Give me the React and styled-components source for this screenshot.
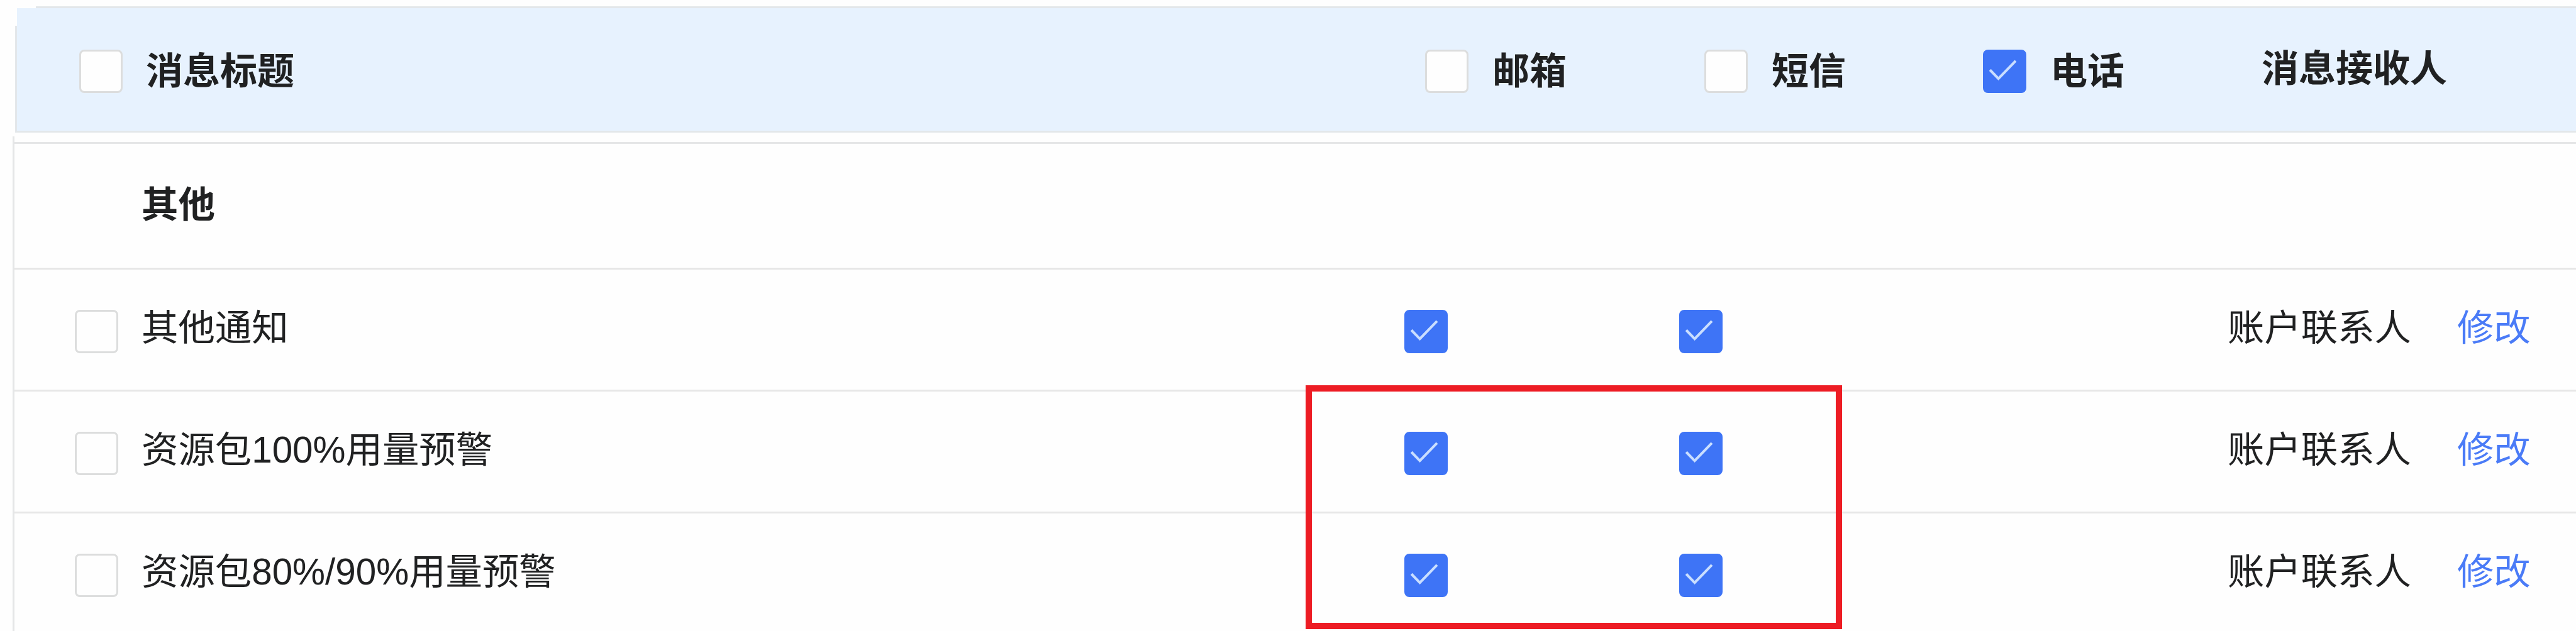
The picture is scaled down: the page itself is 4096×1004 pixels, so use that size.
import React, { useState } from "react";
import styled, { createGlobalStyle } from "styled-components";

const channels = [
  { key: "mail", label: "邮箱" },
  { key: "sms", label: "短信" },
  { key: "phone", label: "电话" },
];

const initialRows = [
  { id: 1, title: "其他通知", mail: true, sms: true },
  { id: 2, title: "资源包100%用量预警", mail: true, sms: true },
  { id: 3, title: "资源包80%/90%用量预警", mail: true, sms: true },
];

const CheckBox = ({ checked, onClick }) => (
  <Box $checked={checked} role="checkbox" aria-checked={checked} onClick={onClick}>
    {checked && (
      <svg viewBox="0 0 77 77">
        <path d="M12.5 36 L27.5 51.5 L58 20" />
      </svg>
    )}
  </Box>
);

const App = () => {
  const [rows, setRows] = useState(initialRows);
  const [head, setHead] = useState({ all: false, mail: false, sms: false, phone: true });

  const toggleHead = (key) => {
    setHead({ ...head, [key]: !head[key] });
  };

  const toggleRow = (id, key) => {
    setRows(rows.map((row) => (row.id === id ? { ...row, [key]: !row[key] } : row)));
  };

  return (
    <Page>
      <GlobalStyle />
      <Header>
        <HeadTitle>
          <CheckBox checked={head.all} onClick={() => toggleHead("all")} />
          <span>消息标题</span>
        </HeadTitle>
        {channels.map((channel) => (
          <HeadCell key={channel.key}>
            <CheckBox
              checked={head[channel.key]}
              onClick={() => toggleHead(channel.key)}
            />
            <span>{channel.label}</span>
          </HeadCell>
        ))}
        <HeadReceiver>消息接收人</HeadReceiver>
      </Header>
      <Body>
        <GroupRow>其他</GroupRow>
        {rows.map((row) => (
          <Row key={row.id}>
            <TitleCell>
              <CheckBox
                checked={!!row.picked}
                onClick={() => toggleRow(row.id, "picked")}
              />
              <Text>{row.title}</Text>
            </TitleCell>
            <CheckBox checked={row.mail} onClick={() => toggleRow(row.id, "mail")} />
            <CheckBox checked={row.sms} onClick={() => toggleRow(row.id, "sms")} />
            <Receiver>
              <Text>账户联系人</Text>
              <Modify>修改</Modify>
            </Receiver>
          </Row>
        ))}
      </Body>
      <Highlight />
    </Page>
  );
};

const GlobalStyle = createGlobalStyle`
  * {
    box-sizing: border-box;
  }
  body {
    margin: 0;
    background: #fefefe;
  }
`;

const Page = styled.div`
  position: relative;
  width: 4096px;
  height: 1004px;
  padding-top: 10px;
  overflow: hidden;
  color: #202122;
  font-family: "Liberation Sans", "Noto Sans CJK SC", sans-serif;
  font-size: 58.4px;
  line-height: 70px;
  white-space: nowrap;
`;

const Box = styled.div`
  width: 69px;
  height: 69px;
  flex: none;
  border: 3px solid ${(props) => (props.$checked ? "#3e74f6" : "#dcdddd")};
  border-radius: 8px;
  background: ${(props) => (props.$checked ? "#3e74f6" : "#fefefe")};
  cursor: pointer;

  svg {
    display: block;
    width: 69px;
    height: 69px;
    margin: -3px;
  }
  path {
    fill: none;
    stroke: #c9deff;
    stroke-width: 4.6;
  }
`;

const Header = styled.div`
  position: relative;
  display: grid;
  grid-template-columns: 2239px 444px 443px 443px 1fr;
  align-items: start;
  height: 201px;
  margin-left: 24px;
  padding-top: 66px;
  border: 3px solid #e3e7ea;
  border-right: none;
  background: #e7f2fe;
  font-size: 59px;
  font-weight: bold;

  /* the outline fades out at the corner */
  &::before {
    content: "";
    position: absolute;
    left: -3px;
    top: -3px;
    width: 30px;
    height: 28px;
    border-top: 3px solid #fefefe;
    border-left: 3px solid #fefefe;
  }
`;

const HeadTitle = styled.div`
  display: flex;
  gap: 37px;
  padding-left: 99px;
`;

const HeadCell = styled.div`
  display: flex;
  gap: 38px;
`;

const HeadReceiver = styled.div`
  margin-top: -4px;
`;

const Body = styled.div`
  margin-left: 20px;
  margin-top: 6px;
  padding-top: 9px;
  border-left: 3px solid #e5e6e7;
`;

const GroupRow = styled.div`
  height: 200px;
  padding: 62px 0 0 202px;
  border-top: 3px solid #e5e6e7;
  font-weight: bold;
`;

const Row = styled.div`
  display: grid;
  grid-template-columns: 2210px 437px 872px 1fr;
  height: 194px;
  padding-top: 64px;
  border-top: 3px solid #e7e7e7;
`;

const TitleCell = styled.div`
  display: flex;
  gap: 37px;
  padding-left: 96px;
`;

const Text = styled.span`
  margin-top: -6px;
`;

const Receiver = styled.div`
  display: flex;
  gap: 73px;
`;

const Modify = styled(Text)`
  color: #4a7bf7;
  cursor: pointer;
`;

const Highlight = styled.div`
  position: absolute;
  left: 2076px;
  top: 613px;
  width: 853px;
  height: 388px;
  border: 10px solid #ed1c24;
`;

export default App;
